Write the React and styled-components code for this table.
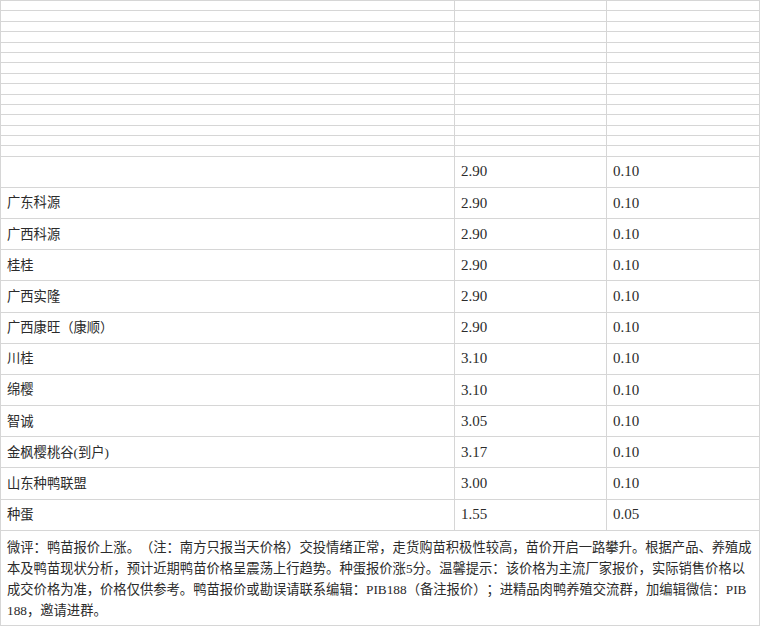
import styled, { createGlobalStyle } from 'styled-components';

const GlobalStyle = createGlobalStyle`
  html, body {
    margin: 0;
    padding: 0;
    background: #ffffff;
  }
  body {
    font-family: "Liberation Serif", "Noto Sans CJK SC", serif;
    color: #2b2b2b;
    text-spacing-trim: space-all;
  }
`

const Sheet = styled.div`
  width: 760px;
  box-sizing: border-box;
  border-top: 1px solid #d6d6d6;
  border-left: 1px solid #d6d6d6;
  border-right: 1px solid #d6d6d6;
  display: flex;
  flex-direction: column;
`

const Row = styled.div`
  display: grid;
  grid-template-columns: 454px 152px 1fr;
  height: ${(p) => p.$h}px;
  box-sizing: border-box;
  border-bottom: 1px solid #d6d6d6;
`

const Cell = styled.div`
  display: flex;
  align-items: center;
  padding: 0 6px;
  box-sizing: border-box;
  font-size: ${(p) => (p.$num ? '15px' : '13.3px')};
  line-height: 1;
  white-space: nowrap;
  overflow: hidden;
  border-right: ${(p) => (p.$last ? 'none' : '1px solid #d6d6d6')};
`

const NoteRow = styled.div`
  height: 95px;
  box-sizing: border-box;
  border-bottom: 1px solid #d6d6d6;
  padding: 6px 6px 0 6px;
  font-size: 13.3px;
  line-height: 21px;
  word-break: break-all;
`

const prices = [
  ['', '2.90', '0.10'],
  ['广东科源', '2.90', '0.10'],
  ['广西科源', '2.90', '0.10'],
  ['桂桂', '2.90', '0.10'],
  ['广西实隆', '2.90', '0.10'],
  ['广西康旺（康顺）', '2.90', '0.10'],
  ['川桂', '3.10', '0.10'],
  ['绵樱', '3.10', '0.10'],
  ['智诚', '3.05', '0.10'],
  ['金枫樱桃谷(到户)', '3.17', '0.10'],
  ['山东种鸭联盟', '3.00', '0.10'],
  ['种蛋', '1.55', '0.05'],
];

const note = '微评：鸭苗报价上涨。（注：南方只报当天价格）交投情绪正常，走货购苗积极性较高，苗价开启一路攀升。根据产品、养殖成本及鸭苗现状分析，预计近期鸭苗价格呈震荡上行趋势。种蛋报价涨5分。温馨提示：该价格为主流厂家报价，实际销售价格以成交价格为准，价格仅供参考。鸭苗报价或勘误请联系编辑：PIB188（备注报价）；进精品肉鸭养殖交流群，加编辑微信：PIB188，邀请进群。';

const App = () => {
  const blanks = Array.from({ length: 15 });

  return (
    <>
      <GlobalStyle />
      <Sheet>
        {blanks.map((_, i) => (
          <Row key={'b' + i} $h={10.4}>
            <Cell />
            <Cell />
            <Cell $last />
          </Row>
        ))}
        {prices.map(([name, price, change], i) => (
          <Row key={i} $h={31.17}>
            <Cell>{name}</Cell>
            <Cell $num>{price}</Cell>
            <Cell $num $last>{change}</Cell>
          </Row>
        ))}
        <NoteRow>{note}</NoteRow>
      </Sheet>
    </>
  )
}

export default App
